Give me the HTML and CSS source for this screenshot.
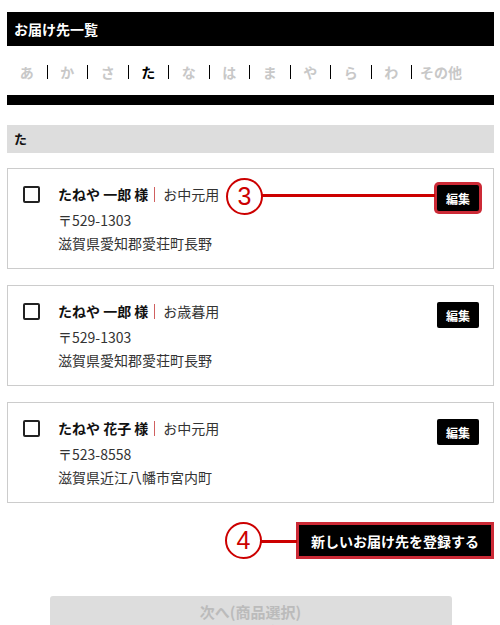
FILE: index.html
```html
<!DOCTYPE html>
<html lang="ja">
<head>
<meta charset="utf-8">
<title>お届け先一覧</title>
<link rel="stylesheet" href="styles.css">
</head>
<body>
<div class="page">
  <h1 class="title">お届け先一覧</h1>
  <ul class="kana">
    <li>あ</li><li>か</li><li>さ</li><li class="on">た</li><li>な</li><li>は</li><li>ま</li><li>や</li><li>ら</li><li>わ</li><li class="other">その他</li>
  </ul>
  <div class="bar"></div>
  <h2 class="section">た</h2>

  <div class="card">
    <span class="check"></span>
    <div class="info">
      <p class="name">たねや 一郎 様<span class="sep"></span><span class="use">お中元用</span></p>
      <p class="line">〒529-1303</p>
      <p class="line">滋賀県愛知郡愛荘町長野</p>
    </div>
    <button class="edit marked">編集</button>
    <span class="callout c3">3</span>
    <span class="lead l3"></span>
  </div>

  <div class="card">
    <span class="check"></span>
    <div class="info">
      <p class="name">たねや 一郎 様<span class="sep"></span><span class="use">お歳暮用</span></p>
      <p class="line">〒529-1303</p>
      <p class="line">滋賀県愛知郡愛荘町長野</p>
    </div>
    <button class="edit">編集</button>
  </div>

  <div class="card">
    <span class="check"></span>
    <div class="info">
      <p class="name">たねや 花子 様<span class="sep"></span><span class="use">お中元用</span></p>
      <p class="line">〒523-8558</p>
      <p class="line">滋賀県近江八幡市宮内町</p>
    </div>
    <button class="edit">編集</button>
  </div>

  <div class="register">
    <span class="callout c4">4</span>
    <span class="lead l4"></span>
    <button class="add">新しいお届け先を登録する</button>
  </div>

  <div class="next">
    <span class="next-main">次へ(商品選択)</span>
    <span class="next-sub">※お届け先を1件以上選択してください</span>
  </div>
</div>
</body>
</html>
```

FILE: styles.css
```css
* { box-sizing: border-box; }
html, body { margin: 0; padding: 0; background: #fff; }
body {
  font-family: "Noto Sans CJK JP", "Noto Sans", sans-serif;
  color: #222;
  overflow: hidden;
}
.page {
  width: 487px;
  margin-left: 7px;
  padding-top: 12px;
}
.title {
  margin: 0;
  height: 34px;
  background: #000;
  color: #fff;
  font-size: 14px;
  font-weight: 700;
  line-height: 34px;
  padding-left: 7px;
}
.kana {
  list-style: none;
  display: flex;
  margin: 19px 0 16px;
  padding: 0;
}
.kana li {
  flex: 0 0 40.5px;
  height: 14px;
  line-height: 14px;
  font-size: 14px;
  font-weight: 700;
  color: #c8c8c8;
  text-align: center;
  border-right: 1px solid #000;
}
.kana li.on { color: #000; }
.kana li.other {
  flex: 0 0 auto;
  border-right: 0;
  padding-left: 8px;
  text-align: left;
}
.bar { height: 10px; background: #000; }
.section {
  margin: 20px 0 15px;
  height: 28px;
  background: #ddd;
  font-size: 13px;
  font-weight: 700;
  line-height: 28px;
  padding-left: 7px;
  color: #111;
}
.card {
  position: relative;
  display: flex;
  align-items: flex-start;
  height: 101px;
  border: 1px solid #ccc;
  padding: 15px 14px 0 15px;
  margin-bottom: 16px;
}
.check {
  flex: 0 0 auto;
  width: 17px;
  height: 17px;
  margin-top: 2px;
  border: 2px solid #222;
  border-radius: 2px;
}
.info { margin-left: 18px; }
.info p { margin: 0; }
.name {
  font-size: 14px;
  font-weight: 700;
  line-height: 20px;
  margin-bottom: 5px !important;
  color: #111;
  display: flex;
  align-items: center;
  white-space: pre;
}
.sep {
  display: inline-block;
  width: 1px;
  height: 15px;
  background: #d06060;
  margin: 0 8px 0 6px;
}
.use { font-weight: 400; color: #333; }
.line {
  font-size: 14px;
  line-height: 23px;
  color: #333;
}
.edit {
  margin-left: auto;
  width: 42px;
  height: 26px;
  border: 0;
  border-radius: 2px;
  background: #000;
  color: #fff;
  font-family: inherit;
  font-size: 12px;
  font-weight: 700;
  padding: 0;
  margin-top: 1px;
}
.edit.marked { box-shadow: 0 0 0 3px #cc2a36; }
.callout {
  position: absolute;
  width: 37px;
  height: 37px;
  border: 2px solid #cc0000;
  border-radius: 50%;
  background: #fff;
  color: #cc0000;
  font-family: "Liberation Sans", sans-serif;
  font-size: 25px;
  line-height: 33px;
  text-align: center;
}
.lead {
  position: absolute;
  height: 3px;
  background: #cc0000;
}
.c3 { left: 218px; top: 9px; }
.l3 { left: 254px; top: 25px; width: 173px; }
.register {
  position: relative;
  display: flex;
  justify-content: flex-end;
  margin-top: 19px;
}
.add {
  width: 198px;
  height: 37px;
  border: 3px solid #cc2a36;
  background: #000;
  color: #fff;
  font-family: inherit;
  font-size: 14px;
  font-weight: 700;
  padding: 0;
}
.c4 { left: 218px; top: 0; }
.l4 { left: 254px; top: 18px; width: 36px; }
.next {
  width: 402px;
  height: 40px;
  margin: 37px auto 0;
  background: #ddd;
  border-radius: 3px;
  display: flex;
  flex-direction: column;
  align-items: center;
  padding-top: 5px;
}
.next-main {
  font-size: 15px;
  font-weight: 700;
  color: #bbb;
  line-height: 22px;
}
.next-sub {
  font-size: 11px;
  color: #bbb;
  line-height: 14px;
}
```
